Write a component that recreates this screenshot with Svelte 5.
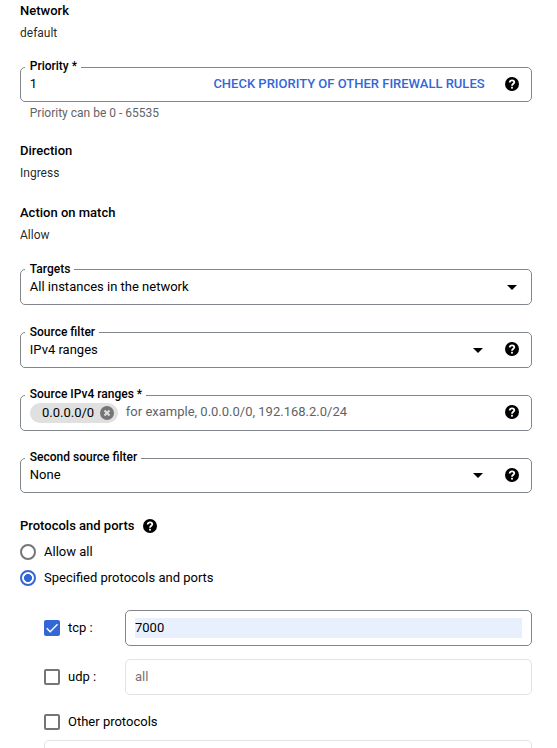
<script>
  const selects = {
    targets: 'All instances in the network',
    source: 'IPv4 ranges',
    second: 'None'
  };
</script>

{#snippet help()}
  <svg class="help" viewBox="0 0 14 14" aria-label="Help">
    <circle cx="7" cy="7" r="7" />
    <path d="M4.700 5.500C4.700 4.100 5.700 3.300 7.050 3.300S9.300 4.100 9.300 5.300C9.300 6.700 7 6.900 7 8.800" />
    <rect x="6.100" y="9.800" width="1.800" height="1.800" />
  </svg>
{/snippet}

{#snippet arrow()}
  <svg class="arrow" viewBox="0 0 10 5"><path d="M0 0h10L5 5z" /></svg>
{/snippet}

<main>
  <section class="pair">
    <h3>Network</h3>
    <p>default</p>
  </section>

  <div class="field short priority">
    <span class="label">Priority *</span>
    <span class="value">1</span>
    <span class="link">CHECK PRIORITY OF OTHER FIREWALL RULES</span>
    {@render help()}
  </div>
  <div class="hint">Priority can be 0 - 65535</div>

  <section class="pair direction">
    <h3>Direction</h3>
    <p>Ingress</p>
  </section>
  <section class="pair action">
    <h3>Action on match</h3>
    <p>Allow</p>
  </section>

  <div class="field low targets">
    <span class="label">Targets</span>
    <span class="value">{selects.targets}</span>
    {@render arrow()}
  </div>
  <div class="field low source">
    <span class="label">Source filter</span>
    <span class="value">{selects.source}</span>
    {@render arrow()}
    {@render help()}
  </div>
  <div class="field ranges">
    <span class="label">Source IPv4 ranges *</span>
    <span class="chip">
      0.0.0.0/0
      <svg viewBox="0 0 14 14"><circle cx="7" cy="7" r="7" /><path d="M4.500 4.500l5 5M9.500 4.500l-5 5" /></svg>
    </span>
    <span class="value muted">for example, 0.0.0.0/0, 192.168.2.0/24</span>
    {@render help()}
  </div>
  <div class="field short">
    <span class="label">Second source filter</span>
    <span class="value">{selects.second}</span>
    {@render arrow()}
    {@render help()}
  </div>

  <div class="protocols">
    <h3>Protocols and ports</h3>
    {@render help()}
  </div>
  <div class="radio"><span class="ring"></span>Allow all</div>
  <div class="radio"><span class="ring on"></span>Specified protocols and ports</div>

  <div class="ports">
    <div class="port">
      <span class="box on">
        <svg viewBox="0 0 16 16"><path d="M2.700 8.300L6.200 11.800L13.500 4.300" /></svg>
      </span>
      <span class="name">tcp :</span>
      <div class="input"><span class="filled">7000</span></div>
    </div>
    <div class="port">
      <span class="box"></span>
      <span class="name">udp :</span>
      <div class="input disabled">all</div>
    </div>
    <div class="other"><span class="box"></span>Other protocols</div>
    <div class="input disabled last"></div>
  </div>
</main>

<style>
  :global(body) {
    background: #fff;
    overflow: hidden;
  }
  main {
    box-sizing: border-box;
    height: 748px;
    overflow: hidden;
    padding: 0 25px 0 20px;
    font: 13px/22px Roboto, sans-serif;
    color: #000;
  }
  h3 {
    margin: 0;
    font-size: 13px;
    font-weight: 500;
  }
  p {
    margin: 0;
    font-size: 12px;
    color: rgba(0, 0, 0, 0.87);
  }
  .field {
    position: relative;
    box-sizing: border-box;
    display: flex;
    align-items: center;
    height: 36px;
    margin-bottom: 27px;
    padding: 0 12px 0 8.800px;
    border: 1px solid #80868b;
    border-radius: 5px;
  }
  .short { height: 35px; padding-bottom: 1px; }
  .priority { margin: 23px 0 0; }
  .label {
    position: absolute;
    left: 4px;
    top: -10px;
    padding: 0 4px 0 4.800px;
    background: #fff;
    font-size: 12px;
    font-weight: 500;
    line-height: 16px;
  }
  .low .label { top: -9px; }
  .value { flex: 1; }
  .link {
    color: #3367d6;
    font-weight: 500;
    margin-right: 20.400px;
  }
  .muted { color: #5f6368; }
  .ranges .muted { padding-bottom: 2px; }
  .help {
    display: block;
    flex: none;
    width: 14px;
    height: 14px;
  }
  .help path { fill: none; stroke: #fff; stroke-width: 1.800; }
  .help rect { fill: #fff; }
  .source .help, .ranges .help { margin-bottom: 2px; }
  .arrow {
    flex: none;
    width: 10px;
    height: 5px;
    margin-right: 2px;
  }
  .arrow + .help { margin-left: 20px; }
  .hint {
    padding-left: 9.800px;
    font-size: 12px;
    color: #5f6368;
  }
  .direction { margin-top: 16px; }
  .action { margin-top: 18px; }
  .targets { margin-top: 23px; }
  .chip {
    display: flex;
    align-items: center;
    box-sizing: border-box;
    width: 88px;
    height: 20px;
    padding: 0 4px 0 12px;
    justify-content: space-between;
    margin-right: 8px;
    border-radius: 10px;
    background: #e0e0e0;
  }
  .ranges { padding-left: 9px; }
  .ranges .muted { margin-left: -0.200px; }
  .chip svg { width: 14px; height: 14px; fill: #757575; }
  .chip path { stroke: #e0e0e0; stroke-width: 2; }
  .protocols {
    display: flex;
    align-items: center;
    gap: 9px;
    margin-top: -5px;
    height: 22px;
  }
  .radio {
    display: flex;
    align-items: center;
    height: 26px;
    gap: 8px;
  }
  .protocols + .radio { margin-top: 2px; }
  .ring {
    box-sizing: border-box;
    width: 16px;
    height: 16px;
    border: 2px solid #757575;
    border-radius: 50%;
  }
  .ring.on {
    border-color: #3367d6;
    background: radial-gradient(circle, #3367d6 3.700px, #fff 4.300px);
  }
  .ports { padding-left: 24px; margin-top: 19px; }
  .port {
    display: flex;
    align-items: center;
    margin-bottom: 13px;
  }
  .box {
    box-sizing: border-box;
    flex: none;
    width: 16px;
    height: 16px;
    margin-right: 8px;
    border: 2px solid #757575;
    border-radius: 2px;
  }
  .box.on { border: 0; background: #3367d6; }
  .box svg { display: block; fill: none; stroke: #fff; stroke-width: 1.400; }
  .name { width: 57px; }
  .input {
    flex: 1;
    box-sizing: border-box;
    display: flex;
    align-items: center;
    height: 36px;
    padding: 0 9px;
    border: 1px solid #80868b;
    border-radius: 5px;
  }
  .disabled { border-color: #e3e3e3; color: #757575; }
  .filled {
    flex: 1;
    height: 20px;
    line-height: 20px;
    background: #e8f0fe;
  }
  .other { display: flex; align-items: center; height: 28px; }
  .last { margin-top: 4px; }
</style>
